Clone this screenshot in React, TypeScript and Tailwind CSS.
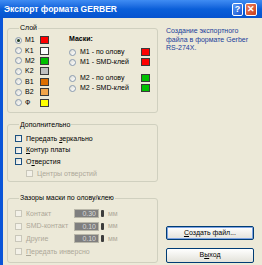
import React from "react";

const font = "font-['Liberation_Sans',Arial,sans-serif]";

function Radio({ checked = false }: { checked?: boolean }) {
  return (
    <span className="w-[7px] h-[7px] rounded-full border border-[#8a9bb0] bg-gradient-to-br from-[#dcdcd4] to-white flex items-center justify-center shrink-0">
      {checked && <span className="w-[3px] h-[3px] rounded-full bg-[#1e3a1e]" />}
    </span>
  );
}

function Check({ disabled = false }: { disabled?: boolean }) {
  return (
    <span
      className={
        "w-[7px] h-[7px] border shrink-0 " +
        (disabled ? "border-[#c9c7ba] bg-[#f3f1e8]" : "border-[#1c5180] bg-gradient-to-br from-[#dcdcd4] to-white")
      }
    />
  );
}

function Swatch({ color }: { color: string }) {
  return <span className={"w-[9px] h-[8px] border border-[#3a3a3a] shrink-0 " + color} />;
}

const layers = [
  { name: "M1", color: "bg-[#ff0000]", on: true },
  { name: "K1", color: "bg-white" },
  { name: "M2", color: "bg-[#00c000]" },
  { name: "K2", color: "bg-[#c0c0c0]" },
  { name: "B1", color: "bg-[#dd6e00]" },
  { name: "B2", color: "bg-[#f2a54a]" },
  { name: "Ф", color: "bg-[#ffff00]" },
];

function MaskRow({ label, color }: { label: string; color: string }) {
  return (
    <div className="h-[10px] flex items-center">
      <Radio />
      <span className="ml-[4px] flex-1">{label}</span>
      <Swatch color={color} />
    </div>
  );
}

function Gap({ label, value }: { label: string; value: string }) {
  return (
    <div className="h-[12.5px] flex items-center text-[#aca899]">
      <Check disabled />
      <span className="ml-[4px] w-[48px]">{label}</span>
      <span className="w-[25px] h-[9px] bg-[#7f7f7f] border border-[#b9b7a9] text-[#d8d8d8] text-right pr-[2px] leading-[7px]">{value}</span>
      <span className="ml-[2px] w-[3px] h-[7px] bg-[#3c3c3c] rounded-[1px]" />
      <span className="ml-[4px]">мм</span>
    </div>
  );
}

export default function App() {
  return (
    <div className={"w-[262px] h-[265px] flex flex-col bg-[#0a55d8] overflow-hidden text-[7px] leading-[8px] text-black " + font}>
      <div className="h-[18px] shrink-0 flex items-center pl-[4px] pr-[5px] bg-gradient-to-b from-[#3f8cf3] via-[#0a5fd9] to-[#0653cf]">
        <span className="text-white font-bold text-[8.5px] flex-1">Экспорт формата GERBER</span>
        <span className="w-[11px] h-[13px] rounded-[2px] border border-white bg-gradient-to-br from-[#5b9af7] to-[#1853cf] text-white font-bold text-[9px] leading-[11px] text-center">?</span>
        <span className="ml-[2px] w-[12px] h-[13px] rounded-[2px] border border-white bg-gradient-to-br from-[#ea7a58] to-[#c9401c] text-white font-bold text-[9px] leading-[11px] text-center">✕</span>
      </div>
      <div className="flex-1 ml-[3px] bg-[#ece9d8] flex pl-[4px] pr-[8px] pt-[6px] pb-[8px] gap-[8px]">
        <div className="w-[151px] flex flex-col">
          <fieldset className="border border-[#d0d0bf] rounded-[3px] pl-[7px] pr-[7px] pt-[3px] pb-[4px] flex">
            <legend className="ml-[4px] px-[1px]">Слой</legend>
            <div className="w-[34px] flex flex-col">
              {layers.map((l) => (
                <div key={l.name} className="h-[10.4px] flex items-center">
                  <Radio checked={l.on} />
                  <span className="ml-[3px] w-[15px]">{l.name}</span>
                  <Swatch color={l.color} />
                </div>
              ))}
            </div>
            <div className="flex-1 ml-[20px] flex flex-col">
              <div className="h-[12px] font-bold">Маски:</div>
              <MaskRow label="M1 - по олову" color="bg-[#ff0000]" />
              <MaskRow label="M1 - SMD-клей" color="bg-[#ff0000]" />
              <div className="h-[6px]" />
              <MaskRow label="M2 - по олову" color="bg-[#00c000]" />
              <MaskRow label="M2 - SMD-клей" color="bg-[#00c000]" />
            </div>
          </fieldset>
          <fieldset className="mt-[8px] border border-[#d0d0bf] rounded-[3px] pl-[7px] pt-[4px] pb-[2px] flex flex-col">
            <legend className="ml-[4px] px-[1px]">Дополнительно</legend>
            <div className="h-[11.7px] flex items-center"><Check /><span className="ml-[4px]">Передать <u>з</u>еркально</span></div>
            <div className="h-[11.7px] flex items-center"><Check /><span className="ml-[4px]"><u>К</u>онтур платы</span></div>
            <div className="h-[11.7px] flex items-center"><Check /><span className="ml-[4px]">О<u>т</u>верстия</span></div>
            <div className="h-[11.7px] flex items-center pl-[11px] text-[#aca899]"><Check disabled /><span className="ml-[4px]">Центры отверстий</span></div>
          </fieldset>
          <fieldset className="mt-[12px] border border-[#d0d0bf] rounded-[3px] pl-[7px] pt-[5px] pb-[3px] flex flex-col">
            <legend className="ml-[4px] px-[1px]">Зазоры маски по олову/клею</legend>
            <Gap label="Контакт" value="0.30" />
            <Gap label="SMD-контакт" value="0.10" />
            <Gap label="Другие" value="0.10" />
            <div className="h-[14px] flex items-center text-[#aca899]"><Check disabled /><span className="ml-[4px]"><u>П</u>ередать инверсно</span></div>
          </fieldset>
        </div>
        <div className="flex-1 flex flex-col">
          <p className="mt-[3px] text-[#20409a] leading-[8.5px]">Создание экспортного файла в формате Gerber RS-274X.</p>
          <div className="flex-1" />
          <button className="h-[14px] rounded-[2px] border border-[#003c74] bg-gradient-to-b from-white to-[#e3e2da] shadow-[inset_0_0_0_1px_#7ea3e2] text-[7px]">
            <u>С</u>оздать файл...
          </button>
          <button className="mt-[8px] h-[15px] rounded-[2px] border border-[#003c74] bg-gradient-to-b from-white to-[#e3e2da] text-[7px]">
            В<u>ы</u>ход
          </button>
        </div>
      </div>
    </div>
  );
}
